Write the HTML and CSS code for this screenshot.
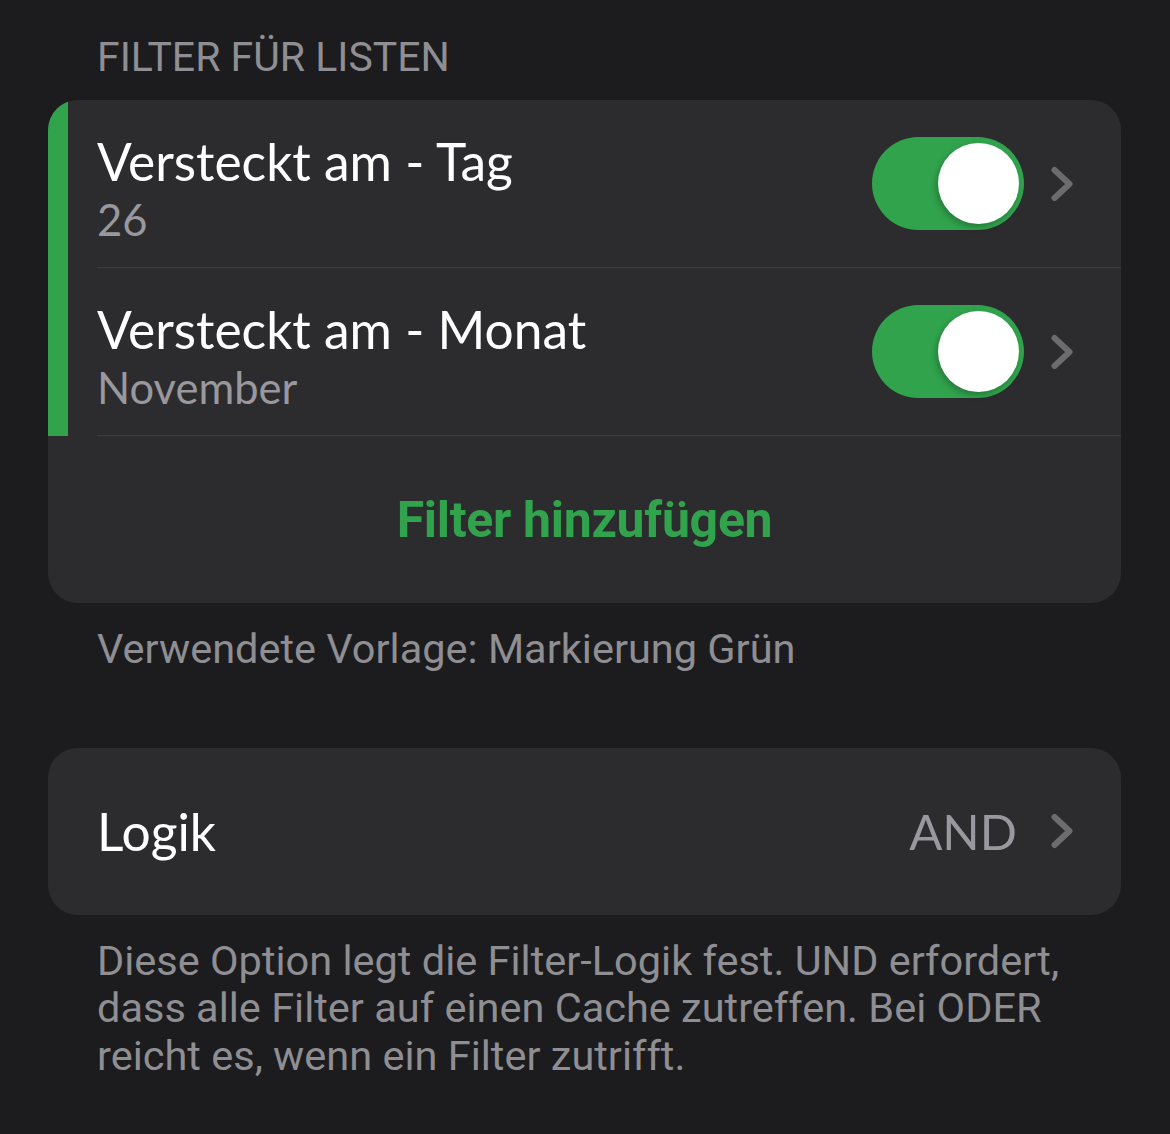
FILE: index.html
```html
<!DOCTYPE html>
<html lang="de">
<head>
    <meta charset="UTF-8">
    <meta name="viewport" content="width=device-width, initial-scale=1.0">
    <title>Filter für Listen</title>
    <link rel="stylesheet" href="styles.css">
</head>
<body>
    <div class="page">
        <div class="section-header">FILTER FÜR LISTEN</div>

        <div class="card">
            <div class="filter-group">
                <div class="row">
                    <div class="row-inner">
                        <div class="row-text">
                            <div class="row-title">Versteckt am - Tag</div>
                            <div class="row-subtitle">26</div>
                        </div>
                        <div class="toggle"><div class="knob"></div></div>
                        <svg class="chevron" viewBox="0 0 24 36"><path d="M4.5 4 L19.5 18 L4.5 32"/></svg>
                    </div>
                </div>
                <div class="row">
                    <div class="row-inner">
                        <div class="row-text">
                            <div class="row-title">Versteckt am - Monat</div>
                            <div class="row-subtitle">November</div>
                        </div>
                        <div class="toggle"><div class="knob"></div></div>
                        <svg class="chevron" viewBox="0 0 24 36"><path d="M4.5 4 L19.5 18 L4.5 32"/></svg>
                    </div>
                </div>
            </div>
            <div class="add-row">Filter hinzufügen</div>
        </div>
        <div class="section-footer">Verwendete Vorlage: Markierung Grün</div>

        <div class="card logic-card">
            <div class="logic-row">
                <div class="row-title">Logik</div>
                <div class="logic-value">AND</div>
                <svg class="chevron" viewBox="0 0 24 36"><path d="M4.5 4 L19.5 18 L4.5 32"/></svg>
            </div>
        </div>
        <div class="section-footer">Diese Option legt die Filter-Logik fest. UND erfordert, dass alle Filter auf einen Cache zutreffen. Bei ODER reicht es, wenn ein Filter zutrifft.</div>
    </div>
</body>
</html>
```

FILE: styles.css
```css
body {
    margin: 0;
    background-color: #1c1c1e;
    font-family: Roboto, "Noto Sans", sans-serif;
    color: #ffffff;
}

.page {
    padding: 0 49px 0 48px;
}

.section-header {
    padding: 30px 0 0 49px;
    height: 100px;
    box-sizing: border-box;
    font-size: 41px;
    line-height: 54px;
    color: #8e8e93;
}

.card {
    background-color: #2c2c2e;
    border-radius: 30px;
    overflow: hidden;
}

.filter-group {
    border-left: 20px solid #31a34d;
}

.row {
    padding-left: 29px;
}

.row-inner {
    display: flex;
    align-items: center;
    height: 167px;
    padding-right: 47px;
    border-bottom: 1px solid #3d3d41;
}

.row-text {
    flex: 1;
    padding-top: 8px;
}

.row-title {
    font-family: Lato, "Noto Sans", sans-serif;
    font-size: 51.5px;
    line-height: 62px;
    color: #ffffff;
}

.row-subtitle {
    font-family: Lato, "Noto Sans", sans-serif;
    font-size: 43.5px;
    line-height: 54px;
    color: #98989e;
}

.toggle {
    width: 152px;
    height: 93px;
    border-radius: 47px;
    background-color: #31a34d;
    display: flex;
    align-items: center;
    justify-content: flex-end;
    padding-right: 5px;
    box-sizing: border-box;
}

.knob {
    width: 81px;
    height: 81px;
    border-radius: 50%;
    background-color: #ffffff;
    box-shadow: -2px 3px 6px rgba(0, 0, 0, 0.25);
}

.chevron {
    width: 24px;
    height: 36px;
    margin-left: 26px;
    fill: none;
    stroke: #6c6c70;
    stroke-width: 6;
    stroke-linecap: round;
    stroke-linejoin: round;
}

.add-row {
    height: 167px;
    display: flex;
    align-items: center;
    justify-content: center;
    font-size: 50px;
    font-weight: 700;
    color: #31a34d;
    letter-spacing: -0.3px;
}

.section-footer {
    padding: 22px 49px 0 49px;
    font-size: 41.5px;
    line-height: 47.5px;
    color: #8e8e93;
}

.logic-card {
    margin-top: 75px;
}

.logic-row {
    display: flex;
    align-items: center;
    height: 167px;
    padding: 0 47px 0 49px;
}

.logic-row .row-title {
    flex: 1;
}

.logic-row .chevron {
    margin-left: 25px;
}

.logic-value {
    font-family: Lato, "Noto Sans", sans-serif;
    font-size: 49px;
    color: #98989e;
    margin-right: 8px;
}
```
